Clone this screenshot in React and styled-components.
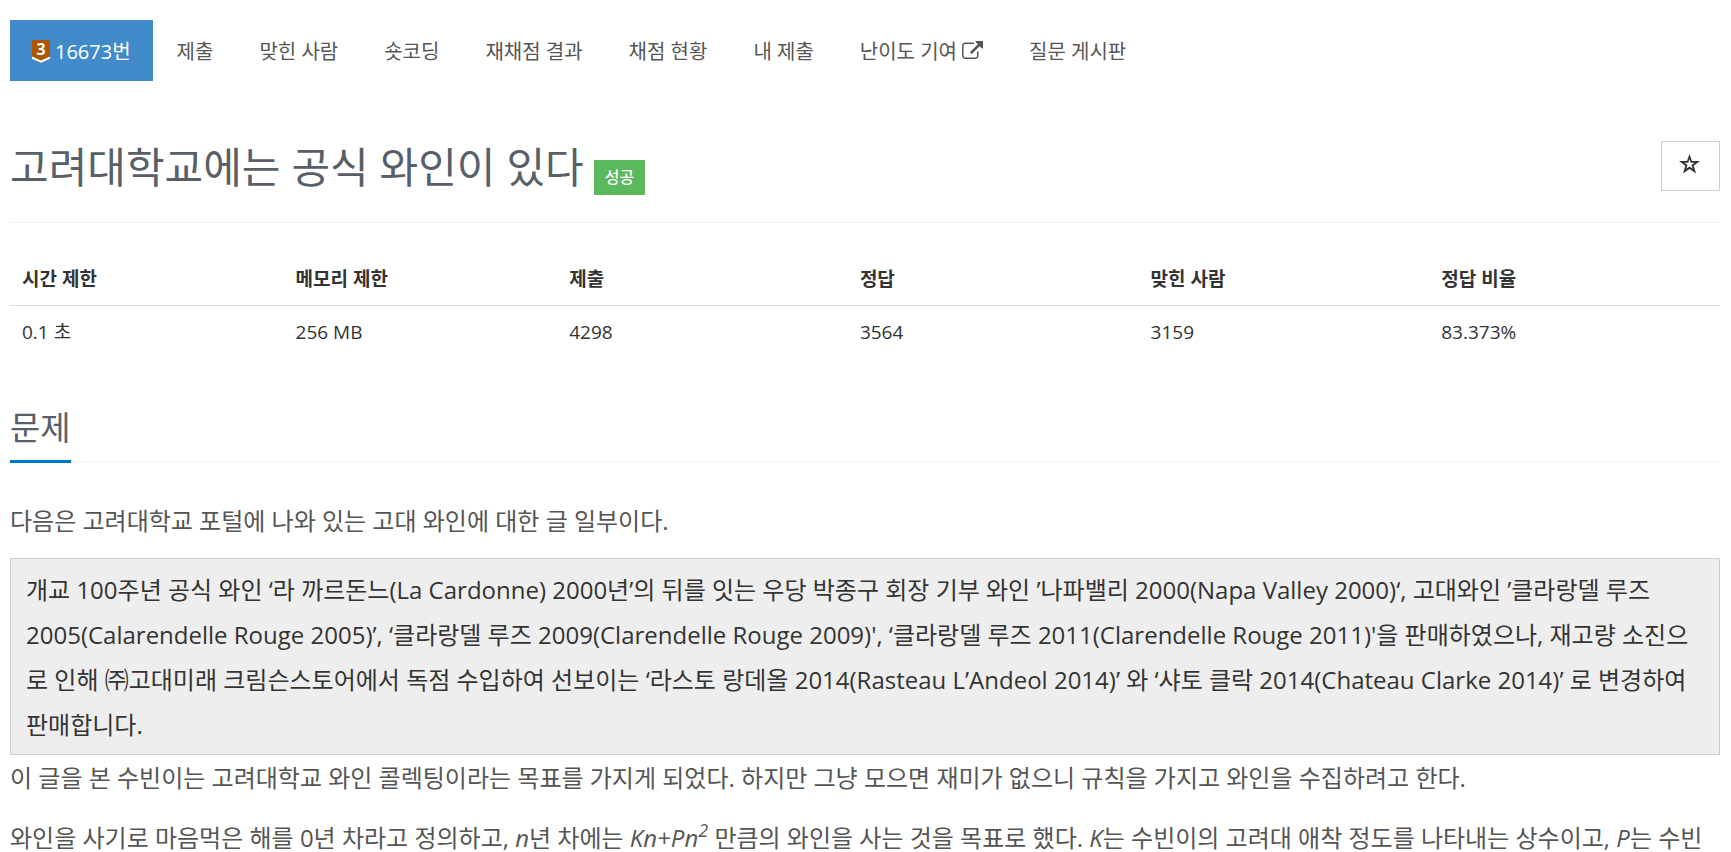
import React from 'react';
import styled, { createGlobalStyle } from 'styled-components';

const Global = createGlobalStyle`
  * { box-sizing: border-box; }
  body { margin: 0; background: #fff; color: #333; font: 20px/30px "Open Sans", "Noto Sans CJK KR", sans-serif; }
`;
const Page = styled.main`
  padding: 20px 11px 0 10px;
`;
const Nav = styled.nav`
  display: flex;
  gap: 2px;
`;
const Tab = styled.a`
  display: flex;
  align-items: center;
  gap: 5px;
  height: 61px;
  padding: 2px 22px 0;
  font-size: 20px;
  white-space: nowrap;
  text-decoration: none;
  color: ${p => (p.$active ? '#fff' : '#555')};
  background: ${p => (p.$active ? '#428bca' : 'transparent')};
`;
const Header = styled.header`
  display: flex;
  justify-content: space-between;
  align-items: flex-start;
  margin-top: 60px;
  padding-bottom: 27px;
  border-bottom: 1px solid #eee;
`;
const Title = styled.h1`
  margin: 0;
  font-size: 42px;
  line-height: 52px;
  font-weight: 400;
  color: #585f69;
`;
const Label = styled.span`
  display: inline-block;
  margin-left: 10px;
  padding: 0 11px;
  background: #5cb85c;
  color: #fff;
  font-size: 16px;
  font-weight: 500;
  line-height: 35px;
`;
const StarButton = styled.button`
  width: 59px;
  height: 50px;
  padding: 0 2px 4px 0;
  border: 1px solid #ccc;
  background: #fff;
  color: #333;
`;
const StarIcon = styled.svg`
  display: block;
  width: 21px;
  height: 20px;
  margin: 0 auto;
`;
const Table = styled.table`
  width: 100%;
  margin-top: 30px;
  border-collapse: collapse;
  table-layout: fixed;
  font-size: 19px;
  line-height: 28px;
  th, td { padding: 12px; text-align: left; }
  th { font-weight: 700; border-bottom: 1px solid #ddd; }
`;
const HeadCell = styled.th`width: ${p => p.$width};`;
const SectionHead = styled.div`
  margin: 49px 0 36px;
  border-bottom: 1px dotted #e4e9f0;
`;
const SectionTitle = styled.h2`
  display: inline-block;
  margin: 0 0 -2px;
  padding-bottom: 11px;
  border-bottom: 3px solid #0076c0;
  font-size: 33px;
  line-height: 42px;
  font-weight: 400;
  color: #585f69;
  vertical-align: bottom;
`;
const Text = styled.p`
  margin: 0 0 15px;
  font-size: 24px;
  line-height: 45px;
  color: #555;
  sup { position: relative; top: -10px; font-size: 18px; line-height: 0; vertical-align: baseline; }
`;
const Quote = styled.blockquote`
  margin: 0;
  padding: 8px 15px 7px;
  border: 1px solid #ccc;
  background: #eee;
  font-size: 24px;
  line-height: 45px;
  color: #333;
`;

const Badge = () => (
  <svg width="18" height="23" viewBox="0 0 18 23" overflow="visible" role="img" aria-label="브론즈 3">
    <path d="M0 0h18v18l-9 5-9-5z" fill="#ad5600" />
    <path d="M0 16.500l9 4 9-4v2.200l-9 4-9-4z" fill="#fff" />
    <text x="9" y="14.500" textAnchor="middle" fontFamily="Open Sans, sans-serif" fontWeight="700" fontSize="16" fill="#fff">3</text>
  </svg>
);
const External = () => (
  <svg width="21" height="21" viewBox="0 0 1792 1792" fill="currentColor" aria-hidden="true">
    <path d="M1408 928v320q0 119-84.5 203.5t-203.5 84.5h-832q-119 0-203.5-84.5t-84.5-203.5v-832q0-119 84.5-203.5t203.5-84.5h704q14 0 23 9t9 23v64q0 14-9 23t-23 9h-704q-66 0-113 47t-47 113v832q0 66 47 113t113 47h832q66 0 113-47t47-113v-320q0-14 9-23t23-9h64q14 0 23 9t9 23zm384-864v512q0 26-19 45t-45 19-45-19l-176-176-652 652q-10 10-23 10t-23-10l-114-114q-10-10-10-23t10-23l652-652-176-176q-19-19-19-45t19-45 45-19h512q26 0 45 19t19 45z" />
  </svg>
);

const tabs = ['제출', '맞힌 사람', '숏코딩', '재채점 결과', '채점 현황', '내 제출', '난이도 기여', '질문 게시판'];
const stats = [
  ['시간 제한', '0.1 초', '16%'],
  ['메모리 제한', '256 MB', '16%'],
  ['제출', '4298', '17%'],
  ['정답', '3564', '17%'],
  ['맞힌 사람', '3159', '17%'],
  ['정답 비율', '83.373%', '17%'],
];

export default function App() {
  return (
    <>
      <Global />
      <Page>
        <Nav>
          <Tab href="#" $active><Badge />16673번</Tab>
          {tabs.map(t => <Tab href="#" key={t}>{t}{t === '난이도 기여' && <External />}</Tab>)}
        </Nav>
        <Header>
          <Title>고려대학교에는 공식 와인이 있다<Label>성공</Label></Title>
          <StarButton type="button" aria-label="즐겨찾기">
            <StarIcon viewBox="0 0 21 20" aria-hidden="true">
              <path fillRule="evenodd" fill="currentColor" d="M10.500 0L13 7H21L14.700 11.800L17 19.500L10.500 15L4 19.500L6.300 11.800L0 7H8ZM10.500 5L9.300 8.700H5.500L8.500 11L7.400 14.700L10.500 12.500L13.600 14.700L12.500 11L15.500 8.700H11.700Z" />
            </StarIcon>
          </StarButton>
        </Header>
        <Table>
          <thead><tr>{stats.map(s => <HeadCell scope="col" $width={s[2]} key={s[0]}>{s[0]}</HeadCell>)}</tr></thead>
          <tbody><tr>{stats.map(s => <td key={s[0]}>{s[1]}</td>)}</tr></tbody>
        </Table>
        <SectionHead><SectionTitle>문제</SectionTitle></SectionHead>
        <Text>다음은 고려대학교 포털에 나와 있는 고대 와인에 대한 글 일부이다.</Text>
        <Quote>개교 100주년 공식 와인 ‘라 까르돈느(La Cardonne) 2000년’의 뒤를 잇는 우당 박종구 회장 기부 와인 ’나파밸리 2000(Napa Valley 2000)‘, 고대와인 ’클라랑델 루즈 2005(Calarendelle Rouge 2005)’, ‘클라랑델 루즈 2009(Clarendelle Rouge 2009)', ‘클라랑델 루즈 2011(Clarendelle Rouge 2011)'을 판매하였으나, 재고량 소진으로 인해 ㈜고대미래 크림슨스토어에서 독점 수입하여 선보이는 ‘라스토 랑데올 2014(Rasteau L’Andeol 2014)’ 와 ‘샤토 클락 2014(Chateau Clarke 2014)’ 로 변경하여 판매합니다.</Quote>
        <Text>이 글을 본 수빈이는 고려대학교 와인 콜렉팅이라는 목표를 가지게 되었다. 하지만 그냥 모으면 재미가 없으니 규칙을 가지고 와인을 수집하려고 한다.</Text>
        <Text>와인을 사기로 마음먹은 해를 0년 차라고 정의하고, <em>n</em>년 차에는 <em>Kn+Pn<sup>2</sup></em> 만큼의 와인을 사는 것을 목표로 했다. <em>K</em>는 수빈이의 고려대 애착 정도를 나타내는 상수이고, <em>P</em>는 수빈</Text>
      </Page>
    </>
  );
}
